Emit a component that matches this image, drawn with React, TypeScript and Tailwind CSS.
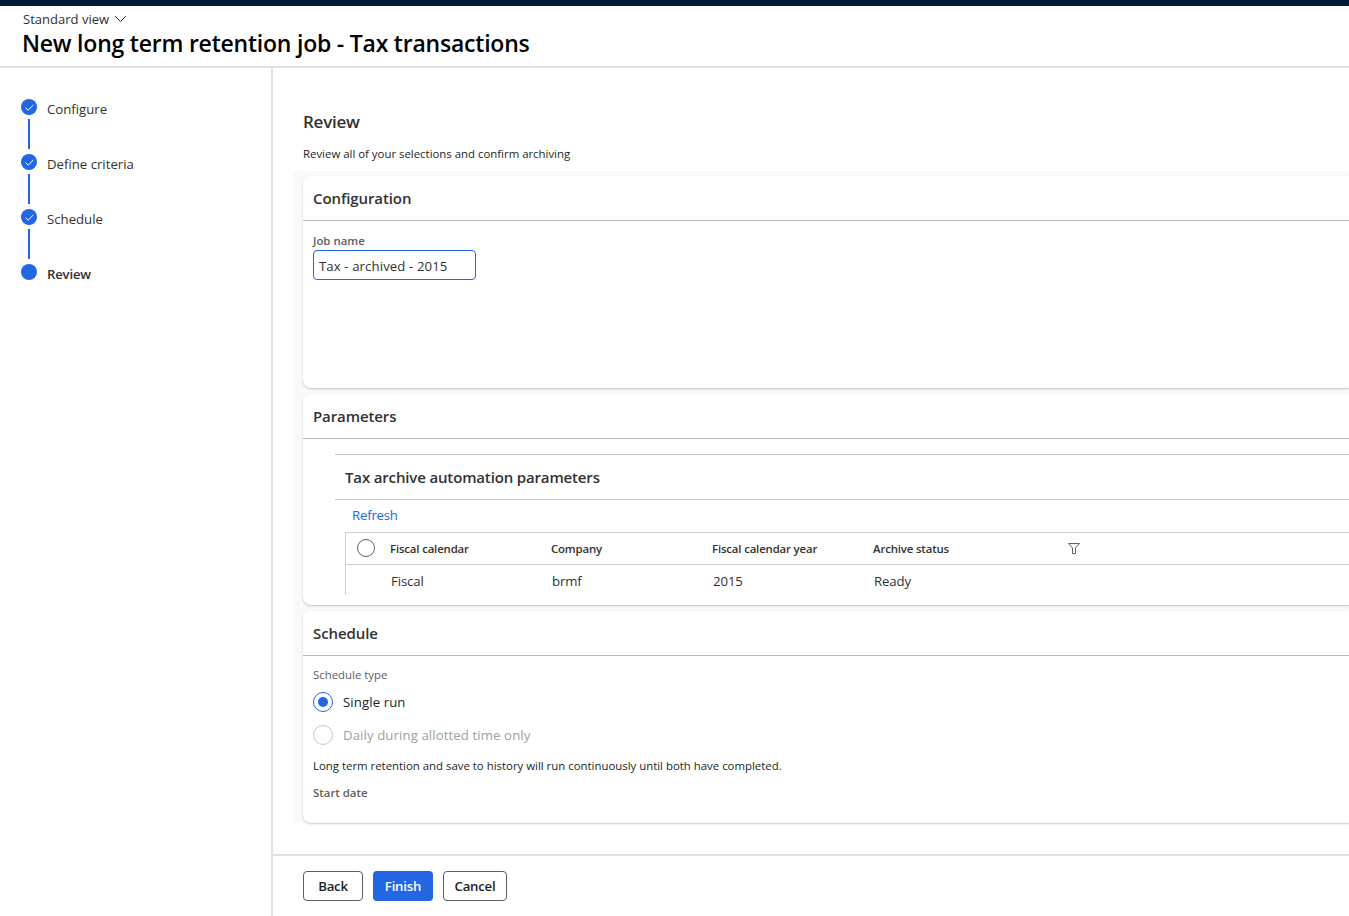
import React from 'react';

const font = "font-['Open_Sans','Noto_Sans',sans-serif]";

const steps = [
  { label: 'Configure', done: true },
  { label: 'Define criteria', done: true },
  { label: 'Schedule', done: true },
  { label: 'Review', done: false },
];

const columns = [
  { title: 'Fiscal calendar', value: 'Fiscal' },
  { title: 'Company', value: 'brmf' },
  { title: 'Fiscal calendar year', value: '2015' },
  { title: 'Archive status', value: 'Ready' },
];

const Step: React.FC<{ label: string; done: boolean; last: boolean }> = ({ label, done, last }) => (
  <div className="flex h-[55px] items-start">
    <div className="flex w-4 flex-col items-center">
      <div className="flex h-4 w-4 items-center justify-center rounded-full bg-[#2266e3]">
        {done && (
          <svg width="11" height="11" viewBox="0 0 11 11" fill="none" stroke="#ffffff" strokeWidth="1">
            <path d="M1.5 5.6 L4.3 8.2 L9.4 2.8" />
          </svg>
        )}
      </div>
      {!last && <div className="mt-1 h-[30px] w-[2px] bg-[#2266e3]" />}
    </div>
    <span className={`ml-[10px] text-[13.2px] leading-5 ${last ? 'font-semibold tracking-[-0.2px] text-[#323130]' : 'text-[#323130]'}`}>
      {label}
    </span>
  </div>
);

const Card: React.FC<{ title: string; height: string; children: React.ReactNode }> = ({ title, height, children }) => (
  <section className={`${height} rounded-l-[8px] bg-white shadow-[0_1px_2px_rgba(0,0,0,0.22)]`}>
    <div className="flex h-[45px] items-center border-b border-[#b8b8b8] pl-[10px] text-[15px] font-semibold tracking-[-0.1px] text-[#323130]">
      {title}
    </div>
    {children}
  </section>
);

const Radio: React.FC<{ label: string; checked?: boolean }> = ({ label, checked }) => (
  <div className="flex h-[33px] items-center">
    <div className={`flex h-5 w-5 items-center justify-center rounded-full border ${checked ? 'border-[#2266e3]' : 'border-[#c8c6c4]'}`}>
      {checked && <div className="h-[10px] w-[10px] rounded-full bg-[#2266e3]" />}
    </div>
    <span className={`ml-[10px] pt-[3px] text-[13.2px] tracking-[0.1px] ${checked ? 'text-[#201f1e]' : 'text-[#a19f9d]'}`}>{label}</span>
  </div>
);

export default function App() {
  return (
    <div className={`${font} flex h-[916px] flex-col overflow-hidden bg-white text-[#201f1e]`}>
      <div className="h-[6px] bg-[#00183a]" />

      {/* Page title */}
      <header className="h-[62px] border-b-2 border-[#e1e1e1] pl-[23px]">
        <div className="flex h-[26px] items-center pt-[1px] text-[13px] tracking-[0.02px] text-[#323130]">
          Standard view
          <svg className="mb-[2px] ml-[5px]" width="13" height="8" viewBox="0 0 13 8" fill="none" stroke="#323130" strokeWidth="1">
            <path d="M1 1 L6.5 6.5 L12 1" />
          </svg>
        </div>
        <h1 className="-ml-[1px] text-[23px] leading-[22px] font-semibold tracking-[-0.22px] text-black">
          New long term retention job - Tax transactions
        </h1>
      </header>

      <div className="flex min-h-0 flex-1">
        {/* Steps */}
        <nav className="w-[273px] shrink-0 border-r-2 border-[#e1e1e1] pt-[31px] pl-[21px]">
          {steps.map((s, i) => (
            <Step key={s.label} label={s.label} done={s.done} last={i === steps.length - 1} />
          ))}
        </nav>

        <main className="flex min-w-0 flex-1 flex-col">
          <div className="h-[788px] border-b-2 border-[#e1e1e1] pl-[20px]">
            <div className="h-[103px] pt-[42px] pl-[10px]">
              <h2 className="text-[17px] leading-6 font-semibold tracking-[-0.25px] text-[#323130]">Review</h2>
              <p className="mt-[12px] text-[11.4px] leading-4 text-[#201f1e]">
                Review all of your selections and confirm archiving
              </p>
            </div>

            <div className="flex flex-col gap-[6px] bg-[#faf9f8] pt-[5px] pl-[10px]">
              <Card title="Configuration" height="h-[212px]">
                <div className="pt-[12px] pl-[10px]">
                  <div className="text-[11.4px] leading-4 font-semibold text-[#605e5c]">Job name</div>
                  <div className="mt-[1px] flex h-[30px] w-[163px] items-center rounded-[4px] border border-[#2266e3] pt-[3px] pl-[5px] text-[13.2px] tracking-[0.1px] text-[#323130]">
                    Tax - archived - 2015
                  </div>
                </div>
              </Card>

              <Card title="Parameters" height="h-[211px]">
                <div className="pt-[15px] pl-[32px]">
                  <div className="flex h-[46px] items-center border-t border-b border-[#c4c4c4] pl-[10px] text-[15px] font-semibold tracking-[-0.15px] text-[#323130]">
                    Tax archive automation parameters
                  </div>
                  <div className="flex h-[32px] items-center pl-[17px] text-[13.2px] tracking-[-0.2px] text-[#2266e3]">Refresh</div>
                  <div className="ml-[10px] border-l border-[#d2d0ce]">
                    <div className="flex h-[33px] items-center border-t border-b border-[#d2d0ce]">
                      <div className="mb-[1px] ml-[11px] h-[18px] w-[18px] rounded-full border border-[#605e5c]" />
                      <div className="ml-[15px] flex">
                        {columns.map((c) => (
                          <div key={c.title} className="w-[161px] text-[11.4px] font-semibold tracking-[-0.15px] text-[#323130]">
                            {c.title}
                          </div>
                        ))}
                      </div>
                      <svg className="mb-[1px] ml-[34px]" width="12" height="11" viewBox="0 0 12 11" fill="none" stroke="#6b5a66" strokeWidth="1">
                        <path d="M0.5 0.5 H11.5 L7.5 5 V10.5 H4.5 V5 Z" />
                      </svg>
                    </div>
                    <div className="flex h-[30px] items-center pt-[4px] pl-[45px]">
                      {columns.map((c) => (
                        <div key={c.title} className="w-[161px] text-[13.2px] tracking-[-0.1px] text-[#323130]">
                          {c.value}
                        </div>
                      ))}
                    </div>
                  </div>
                </div>
              </Card>

              <Card title="Schedule" height="h-[212px]">
                <div className="pt-[11px] pl-[10px]">
                  <div className="text-[11.4px] leading-4 text-[#605e5c]">Schedule type</div>
                  <div className="pt-[2px]">
                    <Radio label="Single run" checked />
                    <Radio label="Daily during allotted time only" />
                  </div>
                  <p className="mt-[7px] text-[11.4px] leading-4 text-[#201f1e]">
                    Long term retention and save to history will run continuously until both have completed.
                  </p>
                  <div className="mt-[11px] text-[11.4px] leading-4 font-semibold text-[#605e5c]">Start date</div>
                </div>
              </Card>
            </div>
          </div>

          {/* Footer buttons */}
          <div className="flex gap-[10px] pt-[15px] pl-[30px]">
            <button className="h-[30px] w-[60px] rounded-[4px] border border-[#605e5c] bg-white pt-[2px] text-[13.2px] font-semibold tracking-[-0.2px] text-[#201f1e]">Back</button>
            <button className="h-[30px] w-[60px] rounded-[4px] bg-[#2266e3] pt-[2px] text-[13.2px] font-semibold tracking-[-0.2px] text-white">Finish</button>
            <button className="h-[30px] w-[64px] rounded-[4px] border border-[#605e5c] bg-white pt-[2px] text-[13.2px] font-semibold tracking-[-0.2px] text-[#201f1e]">Cancel</button>
          </div>
        </main>
      </div>
    </div>
  );
}
